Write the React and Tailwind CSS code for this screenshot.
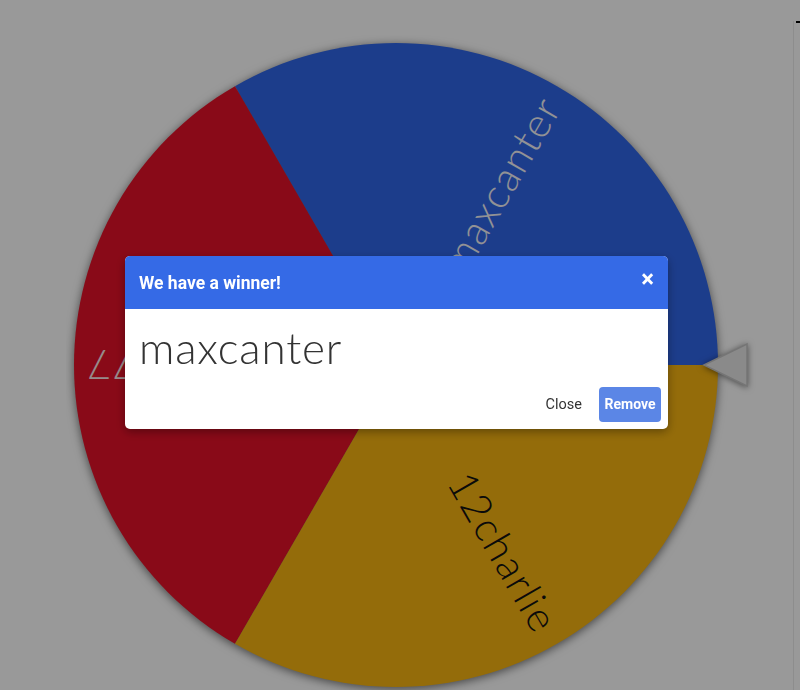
import React from "react";

const CX = 330;
const CY = 330;
const R = 322;

function Wheel() {
  const p0 = `${CX + R},${CY}`;
  const p1 = `${CX - R / 2},${(CY - R * 0.8660254).toFixed(2)}`;
  const p2 = `${CX - R / 2},${(CY + R * 0.8660254).toFixed(2)}`;
  const textStyle = { fontFamily: "Lato, 'Noto Sans', sans-serif", fontWeight: 300, letterSpacing: "1.5px" };
  return (
    <svg width="690" height="665" viewBox="0 0 690 665" className="block">
      <g className="drop-shadow-[0_2px_5px_rgba(0,0,0,0.55)]">
        <path d={`M${CX},${CY} L${p0} A${R},${R} 0 0 0 ${p1} Z`} fill="#3066e8" />
        <path d={`M${CX},${CY} L${p1} A${R},${R} 0 0 0 ${p2} Z`} fill="#e51128" />
        <path d={`M${CX},${CY} L${p2} A${R},${R} 0 0 0 ${p0} Z`} fill="#f7b411" />
      </g>
      <g style={textStyle} fontSize="41">
        <text
          x={CX + 306}
          y={CY}
          textAnchor="end"
          dominantBaseline="central"
          fill="#f4f4f8"
          transform={`rotate(-60 ${CX} ${CY})`}
        >
          maxcanter
        </text>
        <text
          x={CX + 310}
          y={CY}
          textAnchor="end"
          dominantBaseline="central"
          fill="#fbe8ea"
          transform={`rotate(180 ${CX} ${CY})`}
        >
          john77
        </text>
        <text
          x={CX + 304}
          y={CY}
          textAnchor="end"
          dominantBaseline="central"
          fill="#111111"
          transform={`rotate(60 ${CX} ${CY})`}
        >
          12charlie
        </text>
      </g>
      <polygon
        points="638,330 681,309 681,351"
        fill="#e6e6e6"
        stroke="#c4c4c4"
        strokeWidth="1.5"
        className="drop-shadow-[0_1px_3px_rgba(0,0,0,0.5)]"
      />
    </svg>
  );
}

export default function App() {
  return (
    <div className="relative w-[800px] h-[690px] overflow-hidden bg-white flex">
      <div className="w-[793px] h-full pl-[66px] pt-[35px]">
        <Wheel />
      </div>
      <div className="flex-1 pt-[21px]">
        <div className="h-full border-l border-[#ececec] pl-[2px]">
          <div className="h-[2px] w-full bg-black" />
        </div>
      </div>

      <div className="fixed inset-0 bg-black/40">
        <div
          className="absolute left-[125px] top-[256px] w-[543px] h-[173px] bg-white rounded-[5px] overflow-hidden shadow-[0_3px_10px_rgba(0,0,0,0.35)] flex flex-col"
          style={{ fontFamily: "Roboto, 'Liberation Sans', sans-serif" }}
        >
          <div className="h-[53px] bg-[#356ae6] flex items-start justify-between pl-[14px] pr-[14px]">
            <div className="mt-[16px] text-[17.5px] font-bold text-white leading-[22px]">
              We have a winner!
            </div>
            <div className="mt-[11px] text-[24px] font-bold text-white leading-none">×</div>
          </div>
          <div
            className="pl-[14px] pt-[12px] text-[44px] leading-[52px] text-[#333333] font-light tracking-[0.8px]"
            style={{ fontFamily: "Lato, 'Noto Sans', sans-serif" }}
          >
            maxcanter
          </div>
          <div className="flex-1 flex items-end justify-end gap-[4px] pr-[7px] pb-[7px]">
            <div className="h-[35px] px-[13px] flex items-center text-[14.5px] text-[#333333]">Close</div>
            <div className="h-[35px] w-[62px] rounded-[4px] bg-[#5b86e6] flex items-center justify-center text-[14px] font-bold text-white">
              Remove
            </div>
          </div>
        </div>
      </div>
    </div>
  );
}
